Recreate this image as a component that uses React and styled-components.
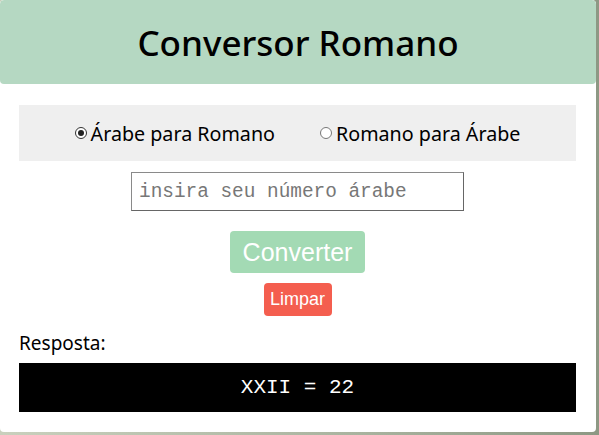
import React from "react";
import styled, { createGlobalStyle } from "styled-components";

const Global = createGlobalStyle`
  html, body { margin: 0; padding: 0; }
  body {
    width: 599px;
    height: 435px;
    overflow: hidden;
    background: linear-gradient(90deg, #c9d0bd 0%, #a9b39f 60%, #8d9884 100%);
    font-family: "Noto Sans", sans-serif;
  }
`;

const Card = styled.div`
  width: 596px;
  height: 432px;
  background: #ffffff;
  border-radius: 4px;
  display: flex;
  flex-direction: column;
  overflow: hidden;
`;

const Header = styled.header`
  height: 84px;
  background: #b5d8c2;
  border-radius: 4px;
  display: flex;
  align-items: center;
  justify-content: center;
`;

const Title = styled.h1`
  margin: 0;
  font-family: "Noto Sans", sans-serif;
  font-weight: 500;
  font-size: 35px;
  color: #000;
`;

const Body = styled.main`
  padding: 21px 20px 0 19px;
  display: flex;
  flex-direction: column;
  align-items: center;
`;

const RadioBar = styled.div`
  align-self: stretch;
  height: 56px;
  background: #efefef;
  display: flex;
  align-items: center;
  justify-content: center;
  gap: 45px;
`;

const RadioLabel = styled.label`
  display: flex;
  align-items: center;
  gap: 4px;
  font-size: 19.7px;
  color: #000;
`;

const Dot = styled.span`
  width: 12px;
  height: 12px;
  border-radius: 50%;
  border: 1px solid ${p => (p.$on ? "#333" : "#777")};
  box-sizing: border-box;
  display: flex;
  align-items: center;
  justify-content: center;
  background: #fff;
  &::after {
    content: "";
    width: 6px;
    height: 6px;
    border-radius: 50%;
    background: ${p => (p.$on ? "#222" : "transparent")};
  }
`;

const Input = styled.input`
  margin-top: 11px;
  width: 333px;
  height: 39px;
  box-sizing: border-box;
  border: 1px solid #8a8a8a;
  border-right-color: #666;
  border-bottom-color: #666;
  padding: 0 7px;
  font-family: "Liberation Mono", monospace;
  font-size: 19.4px;
  outline: none;
  &::placeholder { color: #777; }
`;

const Button = styled.button`
  border: none;
  border-radius: 4px;
  color: #fff;
  font-family: "Liberation Sans", Arial, sans-serif;
  padding: 0;
  cursor: pointer;
`;

const ConvertButton = styled(Button)`
  margin-top: 20px;
  width: 135px;
  height: 42px;
  background: #a3dab4;
  font-size: 25px;
`;

const ClearButton = styled(Button)`
  margin-top: 10px;
  width: 68px;
  height: 33px;
  background: #f45e4f;
  font-size: 18px;
`;

const AnswerLabel = styled.div`
  align-self: flex-start;
  margin-top: 14px;
  font-size: 19px;
  line-height: 26px;
  color: #000;
`;

const AnswerBox = styled.div`
  margin-top: 7px;
  align-self: stretch;
  height: 49px;
  background: #000;
  color: #fff;
  display: flex;
  align-items: center;
  justify-content: center;
  font-family: "Liberation Mono", monospace;
  font-size: 21px;
`;

export default function App() {
  return (
    <>
      <Global />
      <Card>
        <Header>
          <Title>Conversor Romano</Title>
        </Header>
        <Body>
          <RadioBar>
            <RadioLabel><Dot $on />Árabe para Romano</RadioLabel>
            <RadioLabel><Dot />Romano para Árabe</RadioLabel>
          </RadioBar>
          <Input placeholder="insira seu número árabe" />
          <ConvertButton>Converter</ConvertButton>
          <ClearButton>Limpar</ClearButton>
          <AnswerLabel>Resposta:</AnswerLabel>
          <AnswerBox>XXII = 22</AnswerBox>
        </Body>
      </Card>
    </>
  );
}
